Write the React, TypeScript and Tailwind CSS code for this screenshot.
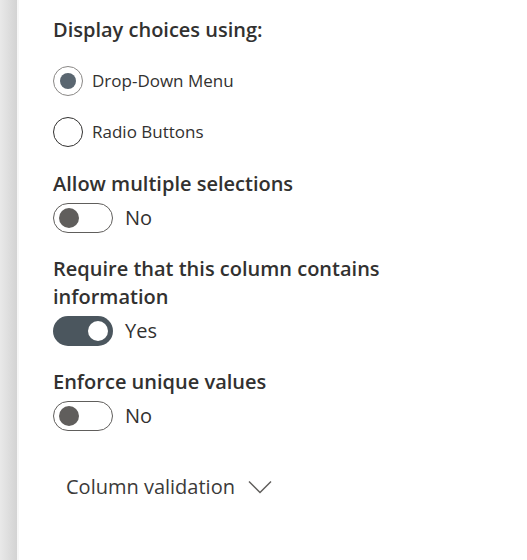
import React from "react";

function Radio({ checked, label }: { checked?: boolean; label: string }) {
  return (
    <div className="flex items-center h-[30px]">
      <div
        className={`w-[30px] h-[30px] rounded-full border-[1.5px] flex items-center justify-center ${
          checked ? "border-[#8a8886]" : "border-[#323130]"
        }`}
      >
        {checked && <div className="w-[16px] h-[16px] rounded-full bg-[#5a6670]" />}
      </div>
      <span className="ml-[9px] text-[17px] text-[#323130] leading-[30px]">{label}</span>
    </div>
  );
}

function Toggle({ on, label }: { on?: boolean; label: string }) {
  return (
    <div className="flex items-center h-[30px]">
      {on ? (
        <div className="w-[60px] h-[30px] rounded-full bg-[#4b565e] flex items-center justify-end pr-[5px]">
          <div className="w-[20px] h-[20px] rounded-full bg-white" />
        </div>
      ) : (
        <div className="w-[60px] h-[30px] rounded-full border-[1.5px] border-[#605e5c] flex items-center pl-[4.5px]">
          <div className="w-[20px] h-[20px] rounded-full bg-[#605e5c]" />
        </div>
      )}
      <span className="ml-[12px] text-[20px] text-[#323130] leading-[30px]">{label}</span>
    </div>
  );
}

export default function App() {
  return (
    <div
      className="flex w-[527px] h-[560px] bg-white overflow-hidden"
      style={{ fontFamily: "'Open Sans', 'Noto Sans', sans-serif" }}
    >
      <div className="w-[17px] h-full bg-gradient-to-r from-[#e9e9e9] to-[#d3d3d3] shrink-0" />
      <div className="w-[2px] h-full bg-[#f7f7f7] shrink-0" />
      <div className="flex flex-col pl-[34px] pt-[16px]">
        <div className="text-[20px] leading-[28px] font-semibold text-[#323130]">Display choices using:</div>
        <div className="flex flex-col gap-[21px] mt-[22px]">
          <Radio checked label="Drop-Down Menu" />
          <Radio label="Radio Buttons" />
        </div>
        <div className="mt-[23px] text-[20px] leading-[28px] font-semibold text-[#323130]">Allow multiple selections</div>
        <div className="mt-[5px]">
          <Toggle label="No" />
        </div>
        <div className="mt-[22px] w-[360px] text-[20px] leading-[28px] font-semibold text-[#323130]">
          Require that this column contains information
        </div>
        <div className="mt-[5px]">
          <Toggle on label="Yes" />
        </div>
        <div className="mt-[22px] text-[20px] leading-[28px] font-semibold text-[#323130]">Enforce unique values</div>
        <div className="mt-[5px]">
          <Toggle label="No" />
        </div>
        <div className="mt-[42px] ml-[13px] flex items-center">
          <span className="text-[20px] leading-[28px] text-[#3b3a39]">Column validation</span>
          <svg className="ml-[13px]" width="24" height="14" viewBox="0 0 24 14" fill="none">
            <path d="M1 1.5 L12 12.5 L23 1.5" stroke="#605e5c" strokeWidth="1.5" />
          </svg>
        </div>
      </div>
    </div>
  );
}
